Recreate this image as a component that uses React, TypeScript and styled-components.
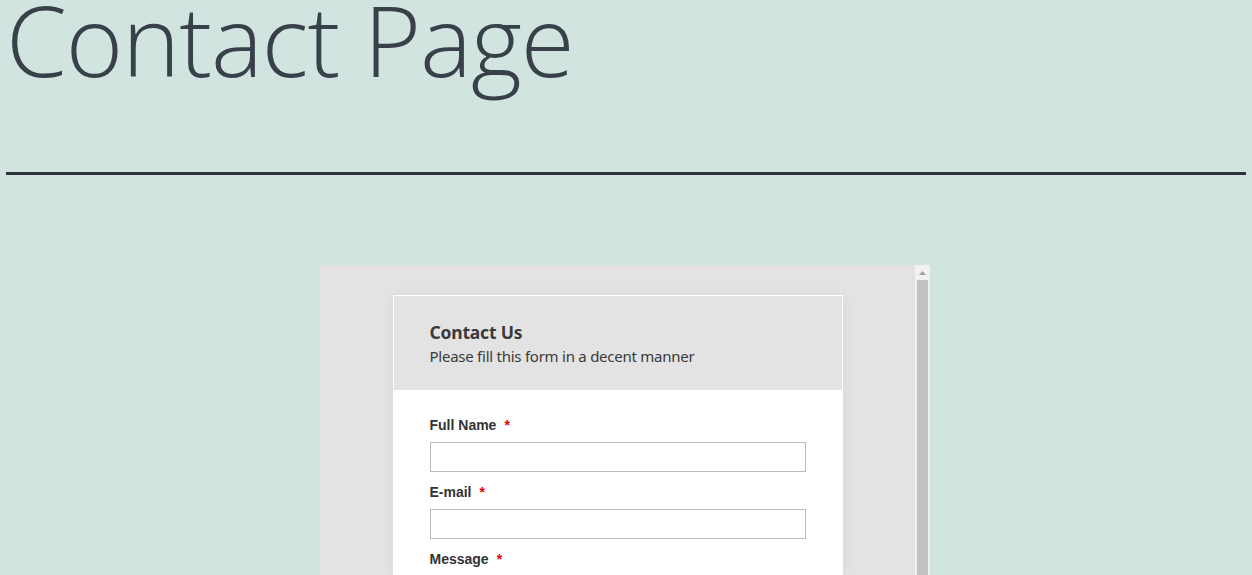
import React from "react";
import styled, { createGlobalStyle } from "styled-components";

const Global = createGlobalStyle`
  html, body { margin: 0; padding: 0; }
  body {
    background: #d2e4df;
    font-family: "Liberation Sans", Arial, sans-serif;
    overflow: hidden;
    height: 575px;
  }
`;

const Page = styled.div`
  display: flex;
  flex-direction: column;
  align-items: center;
`;

const Heading = styled.h1`
  align-self: stretch;
  margin: 0;
  padding: 0 0 0 6px;
  font-family: "Open Sans", "Noto Sans", sans-serif;
  font-weight: 300;
  font-size: 98px;
  line-height: 78px;
  height: 120px;
  color: #38414a;
  letter-spacing: -1px;
  white-space: nowrap;
`;

const Rule = styled.hr`
  width: 99%;
  margin: 52px 0 0;
  border: 0;
  border-top: 3px solid #2b303a;
  height: 0;
`;

const Embed = styled.div`
  margin: 90px 2px 0 0;
  width: 610px;
  height: 320px;
  background: #e4e3e1;
  display: flex;
`;

const Content = styled.div`
  flex: 1;
  display: flex;
  justify-content: center;
  padding-top: 30px;
`;

const Scrollbar = styled.div`
  width: 15px;
  background: #f1f1f1;
  display: flex;
  flex-direction: column;
  align-items: center;
`;

const Arrow = styled.div`
  height: 15px;
  display: flex;
  align-items: center;
  justify-content: center;
`;

const Thumb = styled.div`
  width: 11px;
  flex: 1;
  background: #c1c1c1;
`;

const Card = styled.div`
  width: 450px;
  align-self: flex-start;
  background: #ffffff;
  box-shadow: 0 0 12px rgba(0, 0, 0, 0.06);
`;

const CardHeader = styled.div`
  border: 1px solid #ffffff;
  background: #e3e3e3;
  padding: 25px 36px 0;
  box-sizing: border-box;
  height: 96px;
`;

const CardTitle = styled.div`
  font-family: "Noto Sans", "Open Sans", sans-serif;
  font-weight: 700;
  font-size: 17.5px;
  line-height: 22px;
  color: #3a3a3a;
  letter-spacing: -0.2px;
`;

const CardSub = styled.div`
  font-family: "Noto Sans", "Open Sans", sans-serif;
  font-size: 15px;
  line-height: 20px;
  margin-top: 3px;
  color: #3a3a3a;
  letter-spacing: -0.25px;
`;

const Body = styled.div`
  padding: 25px 37px 0;
  display: flex;
  flex-direction: column;
`;

const Label = styled.div`
  font-weight: 700;
  font-size: 14px;
  line-height: 18px;
  color: #333333;
  margin-bottom: 7px;
`;

const Star = styled.span`
  color: #e60000;
  margin-left: 8px;
`;

const Input = styled.input`
  width: 376px;
  height: 30px;
  box-sizing: border-box;
  border: 1px solid #bcbcbc;
  background: #ffffff;
  margin: 1px 0 11px;
  padding: 0 6px;
  outline: none;
`;

const fields = ["Full Name", "E-mail", "Message"];

export default function App() {
  return (
    <Page>
      <Global />
      <Heading>Contact Page</Heading>
      <Rule />
      <Embed>
        <Content>
          <Card>
            <CardHeader>
              <CardTitle>Contact Us</CardTitle>
              <CardSub>Please fill this form in a decent manner</CardSub>
            </CardHeader>
            <Body>
              {fields.map((f, i) => (
                <React.Fragment key={f}>
                  <Label>
                    {f}
                    <Star>*</Star>
                  </Label>
                  {i < 2 && <Input type="text" />}
                </React.Fragment>
              ))}
            </Body>
          </Card>
        </Content>
        <Scrollbar>
          <Arrow>
            <svg width="7" height="4" viewBox="0 0 7 4">
              <path d="M0 4 L3.5 0 L7 4 Z" fill="#a3a3a3" />
            </svg>
          </Arrow>
          <Thumb />
        </Scrollbar>
      </Embed>
    </Page>
  );
}
